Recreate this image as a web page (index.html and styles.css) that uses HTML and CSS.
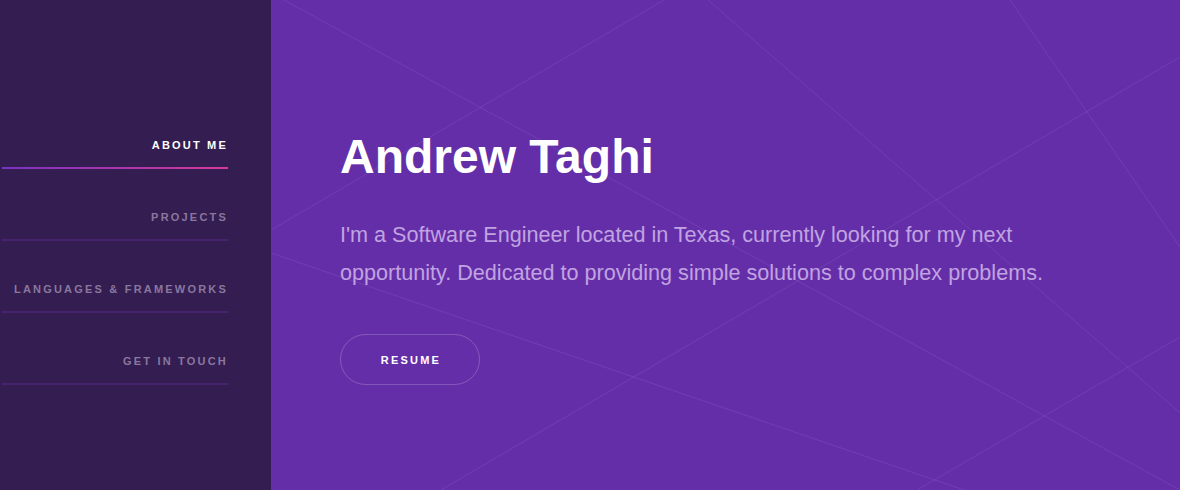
FILE: index.html
```html
<!DOCTYPE html>
<html lang="en">
<head>
<meta charset="utf-8">
<title>Andrew Taghi</title>
<link rel="stylesheet" href="styles.css">
</head>
<body>
<div class="page">
  <aside class="sidebar">
    <nav class="nav">
      <a class="nav-item active" href="#about">About Me</a>
      <a class="nav-item" href="#projects">Projects</a>
      <a class="nav-item" href="#languages">Languages &amp; Frameworks</a>
      <a class="nav-item" href="#contact">Get In Touch</a>
    </nav>
  </aside>
  <main class="hero">
    <svg class="hero-lines" viewBox="0 0 909 490" preserveAspectRatio="none" aria-hidden="true">
      <line x1="13" y1="0" x2="909" y2="490"/>
      <line x1="437" y1="0" x2="909" y2="413"/>
      <line x1="739" y1="0" x2="909" y2="247"/>
      <line x1="0" y1="230" x2="393" y2="0"/>
      <line x1="909" y1="57" x2="170" y2="490"/>
      <line x1="0" y1="253" x2="693" y2="490"/>
      <line x1="909" y1="337" x2="646" y2="490"/>
    </svg>
    <div class="hero-content">
      <h1 class="hero-title">Andrew Taghi</h1>
      <p class="hero-text">I'm a Software Engineer located in Texas, currently looking for my next opportunity. Dedicated to providing simple solutions to complex problems.</p>
      <a class="btn" href="#resume">Resume</a>
    </div>
  </main>
</div>
</body>
</html>
```
FILE: styles.css
```css
* { box-sizing: border-box; }
html, body {
  margin: 0;
  padding: 0;
  height: 100%;
}
body {
  font-family: "Liberation Sans", Arial, sans-serif;
  background: #652ea9;
}
.page {
  display: flex;
  height: 490px;
  overflow: hidden;
}
.sidebar {
  width: 271px;
  flex: 0 0 271px;
  background: #331d51;
  padding-top: 97px;
}
.nav {
  display: flex;
  flex-direction: column;
  margin-left: 2px;
  width: 226px;
}
.nav-item {
  display: block;
  text-align: right;
  text-decoration: none;
  text-transform: uppercase;
  font-size: 11px;
  font-weight: 700;
  letter-spacing: 2.2px;
  line-height: 16px;
  color: #8a779f;
  padding: 40px 0 14px;
  border-bottom: 2px solid #44246c;
}
.nav-item.active {
  color: #ffffff;
  border-bottom: 0;
  padding-bottom: 16px;
  background: linear-gradient(90deg, #7a33c0, #d6399a) no-repeat left bottom / 100% 2px;
}
.hero {
  position: relative;
  flex: 1;
  background: #652ea9;
  padding: 129px 0 0 69px;
}
.hero-lines {
  position: absolute;
  inset: 0;
  width: 100%;
  height: 100%;
}
.hero-lines line {
  stroke: rgba(255, 255, 255, 0.08);
  stroke-width: 1;
}
.hero-content {
  position: relative;
  display: flex;
  flex-direction: column;
  align-items: flex-start;
}
.hero-title {
  margin: 0;
  font-size: 48px;
  line-height: 56px;
  font-weight: 700;
  color: #ffffff;
}
.hero-text {
  margin: 31px 0 0;
  max-width: 740px;
  font-size: 21.6px;
  line-height: 38px;
  color: #c0a3e0;
}
.btn {
  margin-top: 42px;
  display: flex;
  align-items: center;
  justify-content: center;
  width: 140px;
  height: 51px;
  padding-left: 2px;
  border: 1px solid rgba(255, 255, 255, 0.2);
  border-radius: 26px;
  color: #ffffff;
  text-decoration: none;
  text-transform: uppercase;
  font-size: 11px;
  font-weight: 700;
  letter-spacing: 2.2px;
}
```
